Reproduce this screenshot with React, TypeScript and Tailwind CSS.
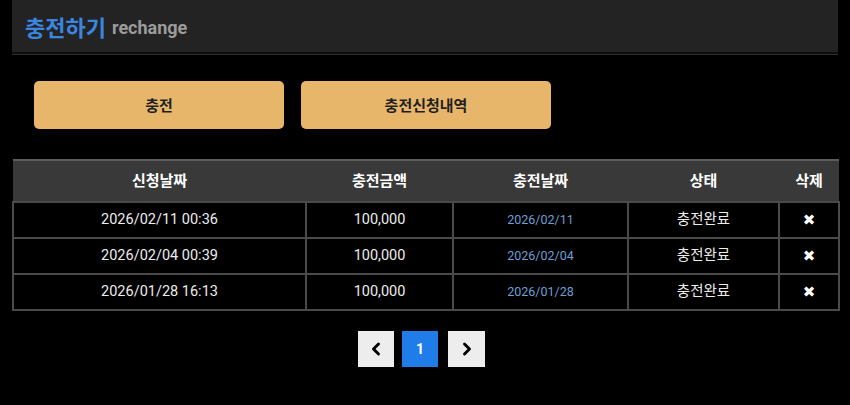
import { ChevronLeft, ChevronRight } from 'lucide-react'

const rows = [
  { requested: '2026/02/11 00:36', amount: '100,000', charged: '2026/02/11', status: '충전완료' },
  { requested: '2026/02/04 00:39', amount: '100,000', charged: '2026/02/04', status: '충전완료' },
  { requested: '2026/01/28 16:13', amount: '100,000', charged: '2026/01/28', status: '충전완료' },
]

const cell = 'border-2 border-[#4a4a4a] h-[36px] text-center p-0'

export default function App() {
  return (
    <div className="w-[850px] h-[405px] bg-black font-['Roboto','Noto_Sans_CJK_KR',sans-serif] overflow-hidden">
      {/* page title bar */}
      <div className="mx-[12px] h-[54px] bg-[#232323] border-b-2 border-b-[#0e0e0e] flex items-center pl-[13px] gap-[6px]">
        <span className="text-[22px] font-bold text-[#3a86e0] font-['Noto_Sans_CJK_KR',sans-serif]">충전하기</span>
        <span className="text-[18px] font-bold text-[#9b9b9b] mt-[2px]">rechange</span>
      </div>
      <div className="mx-[12px] h-px bg-[#2e2e2e]" />

      <div className="flex gap-[17px] pl-[34px] mt-[26px]">
        <button className="w-[250px] h-[48px] rounded-[5px] bg-[#e7b66b] shadow-[0_2px_3px_rgba(0,0,0,0.5)] text-[15px] font-bold text-[#1f1f1f] font-['Noto_Sans_CJK_KR',sans-serif]">
          충전
        </button>
        <button className="w-[250px] h-[48px] rounded-[5px] bg-[#e7b66b] shadow-[0_2px_3px_rgba(0,0,0,0.5)] text-[15px] font-bold text-[#1f1f1f] font-['Noto_Sans_CJK_KR',sans-serif]">
          충전신청내역
        </button>
      </div>

      <div className="mx-[12px] mt-[30px]">
        <table className="w-[826px] border-collapse table-fixed">
          <colgroup>
            <col className="w-[293px]" />
            <col className="w-[147px]" />
            <col className="w-[175px]" />
            <col className="w-[151px]" />
            <col className="w-[60px]" />
          </colgroup>
          <thead>
            <tr className="bg-[#393939] border-t-2 border-t-[#5c5c5c] h-[42px] text-[15px] font-bold text-white">
              <th className="font-bold">신청날짜</th>
              <th className="font-bold">충전금액</th>
              <th className="font-bold">충전날짜</th>
              <th className="font-bold">상태</th>
              <th className="font-bold">삭제</th>
            </tr>
          </thead>
          <tbody className="text-[14.5px] text-[#ececec]">
            {rows.map((r) => (
              <tr key={r.requested}>
                <td className={cell}>{r.requested}</td>
                <td className={cell}>{r.amount}</td>
                <td className={`${cell} text-[12.5px] text-[#6d9fd6]`}>{r.charged}</td>
                <td className={cell}>{r.status}</td>
                <td className={`${cell} text-white text-[15px] font-['DejaVu_Sans',sans-serif]`}>✖</td>
              </tr>
            ))}
          </tbody>
        </table>
      </div>

      <div className="flex justify-center gap-2 mt-[20px] pr-[7px]">
        <button className="w-[36px] h-[36px] bg-[#ededed] flex items-center justify-center text-black">
          <ChevronLeft size={20} strokeWidth={3.5} />
        </button>
        <button className="w-[36px] h-[36px] bg-[#1f7ce8] flex items-center justify-center text-white text-[14px] font-bold">
          1
        </button>
        <button className="w-[37px] h-[36px] bg-[#ededed] flex items-center justify-center text-black ml-[2px]">
          <ChevronRight size={20} strokeWidth={3.5} />
        </button>
      </div>
    </div>
  )
}
